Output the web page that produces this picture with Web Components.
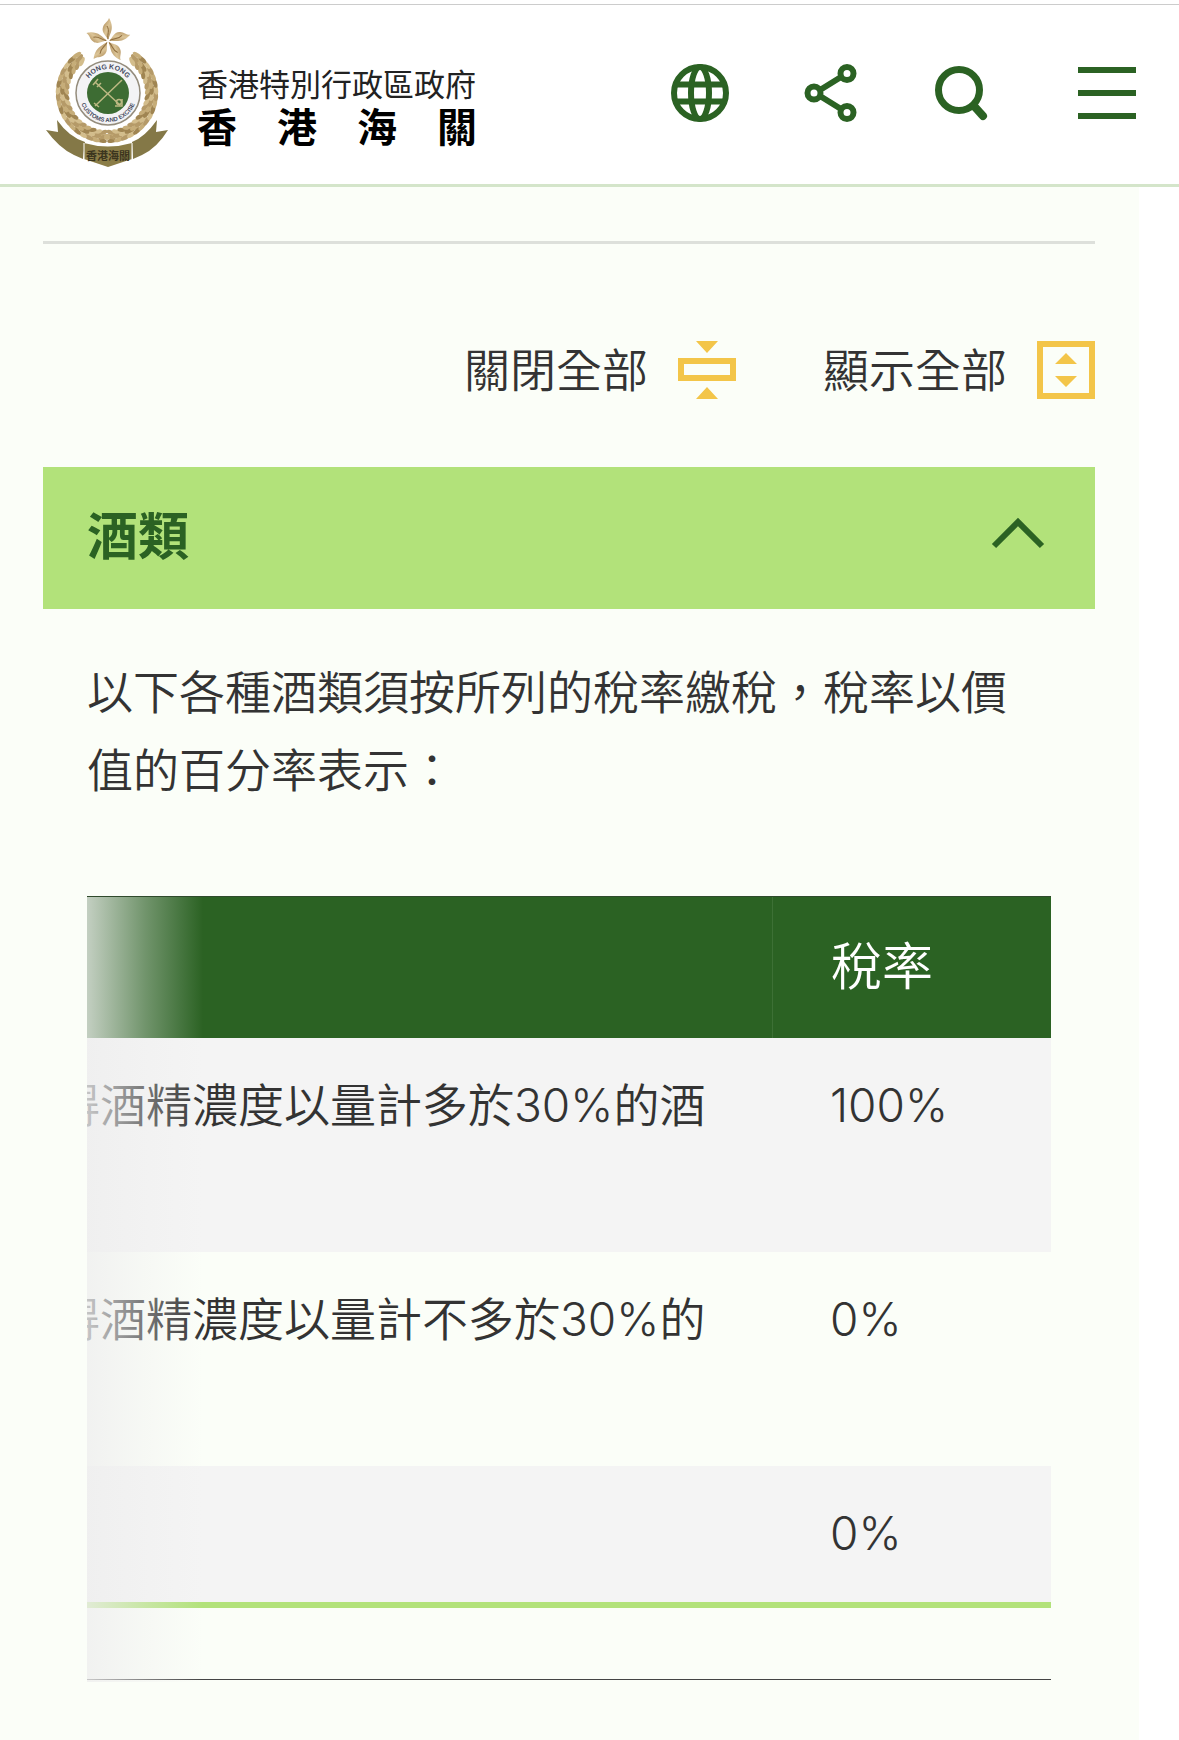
<!DOCTYPE html>
<html lang="zh-HK">
<head>
<meta charset="utf-8">
<meta name="viewport" content="width=device-width, initial-scale=1">
<title>香港海關 - 酒類</title>
<style>
  :root {
    --green: #2b6223;
    --lime: #b2e27a;
    --amber: #f3c549;
    --page: #fbfef8;
    --text: #333333;
  }

  body {
    margin: 0;
    min-height: 100vh;
    display: flex;
    flex-direction: column;
    background: #ffffff;
    color: var(--text);
    font-family: Inter, "Noto Sans CJK TC", sans-serif;
    font-size: 46px;
    font-weight: 350;
    line-height: 78px;
  }
</style>
</head>
<body>

<site-header></site-header>

<page-content>
  <toggle-all></toggle-all>
  <accordion-item heading="酒類">
    <p>以下各種酒類須按所列的稅率繳稅，稅率以價值的百分率表示：</p>
    <duty-table></duty-table>
  </accordion-item>
</page-content>

<script>
// --------------------------------------------------------------------------
// Emblem

class SiteEmblem extends HTMLElement {
  constructor() {
    super();
    this.attachShadow({ mode: 'open' });
  }

  // leaves are laid along both sides of the wreath, from the bottom knot up
  renderLeaves() {
    const colors = ['#b59a68', '#d3bd8c', '#a08552', '#c6ad79'];
    let leaves = '';

    for (let i = 0; i < 18; i++) {
      const angle = (-264 + i * 8) * Math.PI / 180;
      for (let row = 0; row < 3; row++) {
        const radius = 40 + row * 4;
        const x = Math.cos(angle) * (radius + 1);
        const y = Math.sin(angle) * radius;
        const turn = 96 + i * 8 + 62 + row * 16;
        leaves += `<ellipse cx="${x.toFixed(1)}" cy="${y.toFixed(1)}" rx="5" ry="2.200" fill="${colors[(i + row * 3) % 4]}" transform="rotate(${turn} ${x.toFixed(1)} ${y.toFixed(1)})"/>`;
      }
    }

    return leaves;
  }

  connectedCallback() {
    const petals = [0, 72, 144, 216, 288].map((turn) => `
      <g transform="rotate(${turn})">
        <path d="M0-1C-1-5-7-8-5-14C-4-18 0-19 1-23C3-20 5-14 3-9C2-6 1-4 0-1Z" fill="url(#gold)"/>
        <path d="M0-2C-1-7 2-10-1-15" fill="none" stroke="#8d6b3b" stroke-width="1"/>
      </g>
    `).join('');

    this.shadowRoot.innerHTML = /* html */ `
      <style>
        :host { display: block; }
        svg { display: block; width: 122px; height: 150px; }
      </style>

      <svg viewBox="0 0 122 150" role="img" aria-label="香港海關">
        <defs>
          <linearGradient id="gold" x1="0" y1="0" x2="1" y2="1">
            <stop offset="0" stop-color="#a5814d"/>
            <stop offset=".5" stop-color="#dcc598"/>
            <stop offset="1" stop-color="#a88653"/>
          </linearGradient>
          <path id="arc-top" d="M38 75A24 24 0 0 1 86 75"/>
          <path id="arc-bottom" d="M33 75A29 29 0 0 0 91 75"/>
        </defs>

        <g transform="translate(62 23)">${petals}</g>

        <g transform="translate(61 75)">
          <g>${this.renderLeaves()}</g>
          <g transform="scale(-1 1)">${this.renderLeaves()}</g>
          <path d="M-6 43Q0 39 6 43L8 47Q0 44-8 47Z" fill="#b59a68"/>
          <circle cy="44" r="3" fill="#c6ad79"/>
        </g>

        <circle cx="62" cy="75" r="35" fill="#fff"/>
        <circle cx="62" cy="75" r="32" fill="#f3f3f5" stroke="#948c7c" stroke-width="1.5"/>
        <circle cx="62" cy="75" r="21" fill="#3d6c33"/>
        <g fill="none" stroke="#bdb983" stroke-width="1.5">
          <path d="M49 64L74 87M76 62L49 88M47 67L52 61M51 69L55 65M69 88L76 88L76 81M48 85L53 89"/>
          <circle cx="73" cy="84" r="2.5"/>
        </g>
        <g font-family="Liberation Sans, sans-serif" font-weight="700" fill="#464b61" text-anchor="middle">
          <text font-size="7"><textPath href="#arc-top" startOffset="50%">HONG KONG</textPath></text>
          <text font-size="6"><textPath href="#arc-bottom" startOffset="50%">CUSTOMS AND EXCISE</textPath></text>
        </g>

        <path d="M0 112L12 114L11 102Q23 119 39 124L37 141L28 137Q13 130 0 112Z" fill="#847847"/>
        <path d="M122 112L110 114L111 102Q99 119 86 124L87 141L96 137Q111 130 122 112Z" fill="#847847"/>
        <path d="M38 125Q62 132 86 125L86 141L62 149L38 141Z" fill="#8b7d47"/>
        <path d="M38 125L38 141M86 125L86 141" stroke="#fff" stroke-width="1"/>
        <text x="62" y="142" text-anchor="middle" font-family="Noto Sans CJK TC, sans-serif" font-size="11" font-weight="700" fill="#3b351e">香港海關</text>
      </svg>
    `;
  }
}

customElements.define('site-emblem', SiteEmblem);

// --------------------------------------------------------------------------
// Header icon button

const ICONS = {
  globe: `
    <circle cx="29" cy="29" r="26"/>
    <ellipse cx="29" cy="29" rx="9" ry="26"/>
    <path d="M5 20.500H53M5 37.500H53"/>
  `,
  share: `
    <circle cx="12" cy="29" r="6.500"/>
    <circle cx="45" cy="9.500" r="6.500"/>
    <circle cx="45" cy="48.500" r="6.500"/>
    <path d="M18 26L39 13M18 32L39 45"/>
  `,
  search: `
    <circle cx="26" cy="26" r="20.500" stroke-width="7"/>
    <path d="M41 42L50 52" stroke-width="8" stroke-linecap="round"/>
  `,
  menu: `<path d="M0 6H58M0 29H58M0 52H58" stroke-width="6"/>`,
};

class IconButton extends HTMLElement {
  constructor() {
    super();
    this.attachShadow({ mode: 'open' });
  }

  connectedCallback() {
    this.shadowRoot.innerHTML = /* html */ `
      <style>
        :host { display: block; }

        button {
          display: block;
          margin: 0;
          padding: 0;
          border: 0;
          background: none;
          color: var(--green);
          cursor: pointer;
        }

        svg { display: block; width: 58px; height: 58px; }
      </style>

      <button type="button" aria-label="${this.getAttribute('label')}">
        <svg viewBox="0 0 58 58" fill="none" stroke="currentColor" stroke-width="6" aria-hidden="true">
          ${ICONS[this.getAttribute('icon')]}
        </svg>
      </button>
    `;
  }
}

customElements.define('icon-button', IconButton);

// --------------------------------------------------------------------------
// Header

class SiteHeader extends HTMLElement {
  constructor() {
    super();
    this.attachShadow({ mode: 'open' });
  }

  connectedCallback() {
    this.shadowRoot.innerHTML = /* html */ `
      <style>
        :host { display: block; padding-top: 4px; }

        header {
          display: flex;
          align-items: center;
          justify-content: space-between;
          padding: 13px 43px 16px 46px;
          border-top: 1px solid #cccccc;
          border-bottom: 3px solid #d4e5ca;
        }

        a {
          display: flex;
          align-items: center;
          gap: 29px;
          color: #000000;
          text-decoration: none;
        }

        .name { padding-top: 27px; white-space: nowrap; }
        .name span { display: block; color: #222222; font-size: 31px; font-weight: 400; line-height: 42px; }
        .name strong { display: block; font-size: 40px; font-weight: 700; line-height: 44px; }

        nav { display: flex; gap: 73px; }
        .menu { margin-left: 14px; }
      </style>

      <header>
        <a href="#">
          <site-emblem></site-emblem>
          <div class="name">
            <span>香港特別行政區政府</span>
            <strong>香　港　海　關</strong>
          </div>
        </a>
        <nav>
          <icon-button icon="globe" label="語言"></icon-button>
          <icon-button icon="share" label="分享"></icon-button>
          <icon-button icon="search" label="搜尋"></icon-button>
          <icon-button class="menu" icon="menu" label="選單"></icon-button>
        </nav>
      </header>
    `;
  }
}

customElements.define('site-header', SiteHeader);

// --------------------------------------------------------------------------
// Page content

class PageContent extends HTMLElement {
  constructor() {
    super();
    this.attachShadow({ mode: 'open' });
  }

  connectedCallback() {
    this.shadowRoot.innerHTML = /* html */ `
      <style>
        :host {
          display: block;
          flex: 1;
          margin-right: 40px;
          padding: 54px 44px 58px 43px;
          background: var(--page);
        }

        hr { height: 3px; margin: 0 0 97px; border: 0; background: #dde0db; }
      </style>

      <main>
        <hr>
        <slot></slot>
      </main>
    `;
  }
}

customElements.define('page-content', PageContent);

// --------------------------------------------------------------------------
// Close all / show all

class ToggleAll extends HTMLElement {
  constructor() {
    super();
    this.attachShadow({ mode: 'open' });
  }

  connectedCallback() {
    this.shadowRoot.innerHTML = /* html */ `
      <style>
        :host {
          display: flex;
          justify-content: flex-end;
          gap: 87px;
          margin-bottom: 68px;
        }

        button {
          display: flex;
          align-items: center;
          gap: 30px;
          margin: 0;
          padding: 0;
          border: 0;
          background: none;
          color: inherit;
          font: inherit;
          line-height: 58px;
          cursor: pointer;
        }

        svg { display: block; width: 58px; height: 58px; color: var(--amber); }
      </style>

      <button type="button">
        關閉全部
        <svg viewBox="0 0 58 58" fill="currentColor" aria-hidden="true">
          <path d="M18 0H40L29 12ZM18 58H40L29 46Z"/>
          <path d="M0 17H58V40H0ZM6 23V34H52V23Z" fill-rule="evenodd"/>
        </svg>
      </button>
      <button type="button">
        顯示全部
        <svg viewBox="0 0 58 58" fill="currentColor" aria-hidden="true">
          <path d="M0 0H58V58H0ZM6 6V52H52V6Z" fill-rule="evenodd"/>
          <path d="M18 23H40L29 12ZM18 35H40L29 46Z"/>
        </svg>
      </button>
    `;
  }
}

customElements.define('toggle-all', ToggleAll);

// --------------------------------------------------------------------------
// Accordion

class AccordionItem extends HTMLElement {
  constructor() {
    super();
    this.attachShadow({ mode: 'open' });
  }

  connectedCallback() {
    this.shadowRoot.innerHTML = /* html */ `
      <style>
        :host { display: block; }
        h2 { margin: 0; }

        button {
          display: flex;
          align-items: center;
          justify-content: space-between;
          width: 100%;
          margin: 0;
          padding: 28px 50px 30px 44px;
          border: 0;
          background: var(--lime);
          color: var(--green);
          font: inherit;
          font-size: 51px;
          font-weight: 700;
          line-height: 84px;
          cursor: pointer;
        }

        svg { display: block; width: 54px; height: 40px; }
        .panel { padding: 44px 44px 0; }
        .panel[hidden] { display: none; }
        ::slotted(p) { margin: 0 0 87px; }
      </style>

      <h2>
        <button type="button" aria-expanded="true" aria-controls="panel">
          ${this.getAttribute('heading')}
          <svg viewBox="0 0 54 40" fill="none" stroke="currentColor" stroke-width="6" aria-hidden="true">
            <path d="M3 29L27 5L51 29"/>
          </svg>
        </button>
      </h2>
      <div class="panel" id="panel">
        <slot></slot>
      </div>
    `;

    const button = this.shadowRoot.querySelector('button');
    const panel = this.shadowRoot.querySelector('.panel');

    button.addEventListener('click', () => {
      panel.hidden = !panel.hidden;
      button.setAttribute('aria-expanded', String(!panel.hidden));
    });
  }
}

customElements.define('accordion-item', AccordionItem);

// --------------------------------------------------------------------------
// Duty table

class DutyTable extends HTMLElement {
  constructor() {
    super();
    this.attachShadow({ mode: 'open' });
  }

  connectedCallback() {
    this.shadowRoot.innerHTML = /* html */ `
      <style>
        :host { display: block; position: relative; }

        /* the table is wider than its frame and rests at its right end */
        .frame {
          display: flex;
          justify-content: flex-end;
          overflow: hidden;
          padding-bottom: 71px;
          border-top: 1px solid #2f4a2c;
          border-bottom: 1px solid #444444;
        }

        table {
          flex: none;
          width: calc(100% + 91px);
          table-layout: fixed;
          border-collapse: separate;
          border-spacing: 0;
          border-bottom: 6px solid var(--lime);
        }

        th, td {
          padding: 28px 58px 30px;
          text-align: left;
          vertical-align: top;
          white-space: nowrap;
        }

        th {
          background: var(--green);
          color: #ffffff;
          font-size: 51px;
          font-weight: 350;
          line-height: 83px;
        }

        th + th { width: 162px; border-left: 1px solid #3d7035; }
        tbody tr:nth-child(odd) { background: #f4f4f4; }
        .tall { height: 156px; }

        .fade {
          position: absolute;
          top: 1px;
          bottom: -2px;
          left: 0;
          width: 116px;
          background: linear-gradient(to right, rgba(238, 238, 238, 0.78), rgba(238, 238, 238, 0.36) 50%, rgba(238, 238, 238, 0));
          pointer-events: none;
        }
      </style>

      <div class="frame">
        <table>
          <thead>
            <tr><th scope="col"></th><th scope="col">稅率</th></tr>
          </thead>
          <tbody>
            <tr><td class="tall">得酒精濃度以量計多於30%的酒</td><td>100%</td></tr>
            <tr><td class="tall">得酒精濃度以量計不多於30%的</td><td>0%</td></tr>
            <tr><td></td><td>0%</td></tr>
          </tbody>
        </table>
      </div>
      <div class="fade"></div>
    `;
  }
}

customElements.define('duty-table', DutyTable);
</script>
</body>
</html>
